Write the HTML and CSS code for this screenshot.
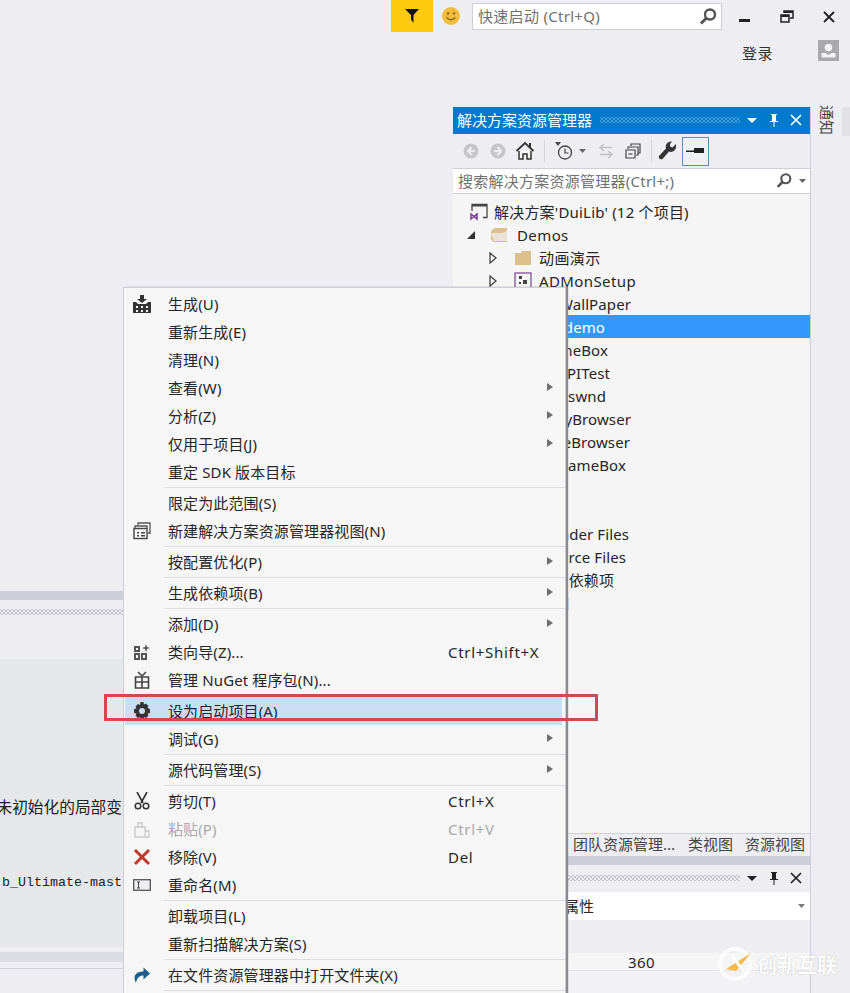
FILE: index.html
```html
<!DOCTYPE html>
<html lang="zh-CN">
<head>
<meta charset="utf-8">
<title>DuiLib - Visual Studio</title>
<link rel="stylesheet" href="styles.css">
</head>
<body>
<div class="ide">
  <header class="top">
    <div class="titlebar">
      <div class="filter"><svg width="16" height="16" viewBox="0 0 16 16"><path d="M1 1h14L9.5 7v8L7 11.5V7z" fill="#111"/></svg></div>
      <svg class="smile" width="20" height="20" viewBox="0 0 20 20"><circle cx="10" cy="10" r="9" fill="#f2bd3c"/><circle cx="7" cy="7.5" r="1.2" fill="#8a6a1a"/><circle cx="13" cy="7.5" r="1.2" fill="#8a6a1a"/><path d="M5.5 11.5q4.500 4.500 9 0" fill="none" stroke="#8a6a1a" stroke-width="1.300"/></svg>
      <div class="quick">
        <span class="quick-text">快速启动 (Ctrl+Q)</span>
        <svg width="20" height="20" viewBox="0 0 20 20"><circle cx="12" cy="7.500" r="5" fill="none" stroke="#555" stroke-width="2.400"/><path d="M8.500 11 3 16.500" stroke="#555" stroke-width="3"/></svg>
      </div>
      <div class="winbtns">
        <svg width="14" height="14" viewBox="0 0 14 14"><rect x="1" y="9" width="11" height="3" fill="#222"/></svg>
        <svg width="14" height="14" viewBox="0 0 14 14"><path d="M4 3V1h9v7h-3M1 5h8v7H1z" fill="none" stroke="#222" stroke-width="1.500"/><path d="M1 5h8v2H1zM4 1h9v2H4z" fill="#222"/></svg>
        <svg width="14" height="14" viewBox="0 0 14 14"><path d="M2 2l10 10M12 2 2 12" stroke="#222" stroke-width="1.800"/></svg>
      </div>
    </div>
    <div class="account">
      <span class="login">登录</span>
      <svg class="avatar" width="21" height="21" viewBox="0 0 21 21"><rect width="21" height="21" fill="#a9a9ad"/><circle cx="10.500" cy="7.500" r="3.800" fill="#f2f2f4"/><path d="M3.500 13h4q3 3.500 6 0h4v4.500h-14z" fill="#f2f2f4"/></svg>
    </div>
  </header>

  <main class="workspace">
    <section class="left">
      <div class="left-top"></div>
      <div class="band"></div>
      <div class="output-head"><div class="dots"></div></div>
      <div class="log">
        <div class="log-line first">未初始化的局部变</div>
        <div class="log-line second">b_Ultimate-mast</div>
      </div>
      <div class="log-foot"><div class="log-scroll"></div></div>
    </section>

    <section class="explorer">
      <div class="pane-title active">
        <span class="pane-name">解决方案资源管理器</span>
        <div class="dots dots-blue"></div>
        <div class="pane-btns">
          <svg width="12" height="12" viewBox="0 0 12 12"><path d="M1 4h10L6 9z" fill="#fff"/></svg>
          <svg width="12" height="14" viewBox="0 0 12 14"><path d="M3 1h6v1H8v6h2v1H2V8h2V2H3zM5.500 9h1v5h-1z" fill="#fff"/></svg>
          <svg width="12" height="12" viewBox="0 0 12 12"><path d="M1 1l10 10M11 1 1 11" stroke="#fff" stroke-width="1.700"/></svg>
        </div>
      </div>
      <div class="toolbar">
        <svg class="t-back" width="18" height="18" viewBox="0 0 18 18"><circle cx="9" cy="9" r="7.500" fill="#c6c6c8"/><path d="M9.500 5 6 9l3.500 4M6.500 9H13" fill="none" stroke="#eeeef2" stroke-width="2"/></svg>
        <svg class="t-fwd" width="18" height="18" viewBox="0 0 18 18"><circle cx="9" cy="9" r="7.500" fill="#c6c6c8"/><path d="M8.500 5 12 9l-3.500 4M11.500 9H5" fill="none" stroke="#eeeef2" stroke-width="2"/></svg>
        <svg class="t-home" width="20" height="20" viewBox="0 0 20 20"><path d="M1.500 10 10 2l8.500 8" fill="none" stroke="#333" stroke-width="1.800"/><path d="M4 10v8h4v-5h4v5h4v-8" fill="#f5f5f5" stroke="#333" stroke-width="1.500"/><path d="M14 2h2v4h-2z" fill="#333"/></svg>
        <span class="t-sep"></span>
        <svg class="t-hist" width="20" height="20" viewBox="0 0 20 20"><path d="M1 1h6L4 5z" fill="#444"/><circle cx="11" cy="11.500" r="6.500" fill="none" stroke="#444" stroke-width="1.300"/><path d="M11 7.500v4.500h3.500" fill="none" stroke="#444" stroke-width="1.200"/></svg>
        <svg class="t-caret" width="8" height="6" viewBox="0 0 8 6"><path d="M0 1h7L3.500 5z" fill="#666"/></svg>
        <svg class="t-sync" width="16" height="16" viewBox="0 0 16 16"><path d="M6 1 2 4.500 6 8M2 4.500h12M10 8l4 3.500L10 15M14 11.500H2" fill="none" stroke="#c2c2c4" stroke-width="1.600"/></svg>
        <svg class="t-copy" width="18" height="18" viewBox="0 0 18 18"><path d="M7 4V2h9v9h-2M4 7V5h10v8h-2M2 8h9v8H2z" fill="none" stroke="#444" stroke-width="1.200"/><path d="M4.500 12h4" stroke="#444" stroke-width="1.200"/></svg>
        <span class="t-sep t-sep2"></span>
        <svg class="t-wrench" width="20" height="20" viewBox="0 0 20 20"><path d="M18 3l-3.500 3.500-2.500-1L12 3l2-2.500C10 0 7 3 8 7.500L1 15c-1 2 1.500 4 3.500 3l6.500-7.500c4 1.500 8-1.500 7-7.500z" fill="#333"/></svg>
        <span class="t-active"><svg width="20" height="10" viewBox="0 0 20 10"><rect x="0" y="4.500" width="8" height="1.500" fill="#222"/><rect x="8" y="2" width="10" height="5" fill="#222"/></svg></span>
      </div>
      <div class="pane-search">
        <span class="search-text">搜索解决方案资源管理器(Ctrl+;)</span>
        <svg width="18" height="18" viewBox="0 0 20 20"><circle cx="12" cy="7.500" r="5" fill="none" stroke="#555" stroke-width="2.400"/><path d="M8.500 11 3 16.500" stroke="#555" stroke-width="3"/></svg>
        <svg class="caret-s" width="8" height="6" viewBox="0 0 8 6"><path d="M0 1h7L3.500 5z" fill="#666"/></svg>
      </div>
      <div class="tree">
        <div class="row lv0">
          <svg class="ti" width="18" height="18" viewBox="0 0 18 18"><path d="M2 8V1.500h15v13h-4" fill="none" stroke="#444" stroke-width="1.300"/><path d="M2 1.500h15v2H2z" fill="#444"/><path d="M1 11v5l2-1.500 4-3.500v5l-4-3.500L1 11z" fill="none" stroke="#7a3b98" stroke-width="1.500"/></svg>
          <span>解决方案'DuiLib' (12 个项目)</span>
        </div>
        <div class="row lv1">
          <svg class="arrow" width="10" height="10" viewBox="0 0 10 10"><path d="M9 1v8H1z" fill="#333"/></svg>
          <svg class="ti" width="20" height="16" viewBox="0 0 20 16"><path d="M3 3 6 1h12v14H5L2 13V5z" fill="#dcc08c"/><path d="M2 6h11l5-2v10H5z" fill="#eeeef0" opacity=".75"/></svg>
          <span>Demos</span>
        </div>
        <div class="row lv2">
          <svg class="arrow" width="10" height="12" viewBox="0 0 10 12"><path d="M2 1l6 5-6 5z" fill="none" stroke="#444" stroke-width="1.300"/></svg>
          <svg class="ti" width="18" height="16" viewBox="0 0 18 16"><path d="M1 3h6l1-2h9v14H1z" fill="#dcc08c"/></svg>
          <span>动画演示</span>
        </div>
        <div class="row lv2">
          <svg class="arrow" width="10" height="12" viewBox="0 0 10 12"><path d="M2 1l6 5-6 5z" fill="none" stroke="#444" stroke-width="1.300"/></svg>
          <svg class="ti" width="18" height="18" viewBox="0 0 18 18"><rect x="1" y="1" width="16" height="16" fill="none" stroke="#8b5a9f" stroke-width="1.400"/><path d="M5 4h3v3H5zM9 8h4v4H9zM5 10h2v2H5z" fill="#444"/></svg>
          <span>ADMonSetup</span>
        </div>
        <div class="row lv2"><span class="cut to631">BkWallPaper</span></div>
        <div class="row lv2 selected"><span class="cut to605">duidemo</span></div>
        <div class="row lv2"><span class="cut to608">GameBox</span></div>
        <div class="row lv2"><span class="cut to610">APITest</span></div>
        <div class="row lv2"><span class="cut to606">Aswnd</span></div>
        <div class="row lv2"><span class="cut to631">MyBrowser</span></div>
        <div class="row lv2"><span class="cut to630">WeBrowser</span></div>
        <div class="row lv2"><span class="cut to626">GameBox</span></div>
        <div class="row lv2"></div>
        <div class="row lv2"></div>
        <div class="row lv2"><span class="cut to629">Header Files</span></div>
        <div class="row lv2"><span class="cut to626">Source Files</span></div>
        <div class="row lv2"><span class="cut to614">外部依赖项</span></div>
        <div class="row lv2"><span class="cut to569">说明</span></div>
      </div>
      <nav class="tabs">
        <span class="tab-a">团队资源管理...</span>
        <span class="tab-b">类视图</span>
        <span class="tab-c">资源视图</span>
      </nav>
      <div class="band"></div>
      <div class="pane-title">
        <div class="dots"></div>
        <div class="pane-btns">
          <svg width="12" height="12" viewBox="0 0 12 12"><path d="M1 4h10L6 9z" fill="#222"/></svg>
          <svg width="12" height="14" viewBox="0 0 12 14"><path d="M3 1h6v1H8v6h2v1H2V8h2V2H3zM5.500 9h1v5h-1z" fill="#222"/></svg>
          <svg width="12" height="12" viewBox="0 0 12 12"><path d="M1 1l10 10M11 1 1 11" stroke="#222" stroke-width="1.700"/></svg>
        </div>
      </div>
      <div class="prop-select">
        <span class="prop-name">项目属性</span>
        <svg width="8" height="6" viewBox="0 0 8 6"><path d="M0 1h7L3.500 5z" fill="#777"/></svg>
      </div>
      <div class="prop-gap"></div>
      <div class="prop-row"><span>360</span></div>
      <div class="prop-rest"></div>
    </section>

    <aside class="rail">
      <span class="notify">通知</span>
      <span class="rail-strip"></span>
    </aside>
  </main>

  <div class="menu">
    <div class="item"><span class="ic"><svg width="20" height="18" viewBox="0 0 20 18"><path d="M8 0h4v4h3l-5 4-5-4h3z" fill="#333"/><path d="M1 7h3l2 2h8l2-2h3v11H1z" fill="#333"/><path d="M4 11h2v2H4zM9 11h2v2H9zM14 11h2v2h-2zM4 15h2v2H4zM9 15h2v2H9zM14 15h2v2h-2z" fill="#f6f6f6"/></svg></span><span>生成(U)</span></div>
    <div class="item"><span class="ic"></span><span>重新生成(E)</span></div>
    <div class="item"><span class="ic"></span><span>清理(N)</span></div>
    <div class="item"><span class="ic"></span><span>查看(W)</span><i class="more"></i></div>
    <div class="item"><span class="ic"></span><span>分析(Z)</span><i class="more"></i></div>
    <div class="item"><span class="ic"></span><span>仅用于项目(J)</span><i class="more"></i></div>
    <div class="item"><span class="ic"></span><span>重定 SDK 版本目标</span></div>
    <div class="sep"></div>
    <div class="item"><span class="ic"></span><span>限定为此范围(S)</span></div>
    <div class="item"><span class="ic"><svg width="20" height="18" viewBox="0 0 20 18"><path d="M6 3V1h12v10h-2M3 6V4h12v2" fill="none" stroke="#555" stroke-width="1.300"/><rect x="2" y="6.500" width="13" height="10" fill="none" stroke="#444" stroke-width="1.400"/><path d="M5 10h2v1.500H5zM9 10h4v1.500H9zM5 13h2v1.500H5zM9 13h4v1.500H9z" fill="#444"/></svg></span><span>新建解决方案资源管理器视图(N)</span></div>
    <div class="sep"></div>
    <div class="item"><span class="ic"></span><span>按配置优化(P)</span><i class="more"></i></div>
    <div class="sep"></div>
    <div class="item"><span class="ic"></span><span>生成依赖项(B)</span><i class="more"></i></div>
    <div class="sep"></div>
    <div class="item"><span class="ic"></span><span>添加(D)</span><i class="more"></i></div>
    <div class="item"><span class="ic"><svg width="18" height="18" viewBox="0 0 18 18"><path d="M1 3h6v6H1zM1 10h6v7H1zM8 10h6v7H8z" fill="#555"/><path d="M3 5h2v2H3zM3 12h2v3H3zM10 12h2v3h-2z" fill="#f6f6f6"/><path d="M13 1l1 3 3 1-3 1-1 3-1-3-3-1 3-1z" fill="#555"/></svg></span><span>类向导(Z)...</span><span class="key">Ctrl+Shift+X</span></div>
    <div class="item"><span class="ic"><svg width="16" height="18" viewBox="0 0 16 18"><path d="M1.500 6h13v11h-13zM1.500 11h13M8 6v11" fill="none" stroke="#444" stroke-width="1.600"/><path d="M4 1l4 4 4-4" fill="none" stroke="#444" stroke-width="1.500"/></svg></span><span>管理 NuGet 程序包(N)...</span></div>
    <div class="sep"></div>
    <div class="item hot"><span class="ic"><svg width="18" height="18" viewBox="0 0 18 18"><path d="M7.500 0h3l.5 2.500 2-1 2.500 2.500-1 2L17 7v4l-2.500.5 1 2-2.500 2.500-2-1-.5 2.500h-3l-.5-2.500-2 1L2.500 13.500l1-2L1 11V7l2.500-.5-1-2L5 2l2 1z" fill="#333"/><circle cx="9" cy="9" r="3" fill="#c9def5"/></svg></span><span>设为启动项目(A)</span></div>
    <div class="item"><span class="ic"></span><span>调试(G)</span><i class="more"></i></div>
    <div class="sep"></div>
    <div class="item"><span class="ic"></span><span>源代码管理(S)</span><i class="more"></i></div>
    <div class="sep"></div>
    <div class="item"><span class="ic"><svg width="16" height="18" viewBox="0 0 16 18"><path d="M3 0l6 11M13 0 7 11" stroke="#333" stroke-width="1.600"/><circle cx="4" cy="14" r="2.800" fill="none" stroke="#333" stroke-width="1.500"/><circle cx="12" cy="14" r="2.800" fill="none" stroke="#333" stroke-width="1.500"/></svg></span><span>剪切(T)</span><span class="key">Ctrl+X</span></div>
    <div class="item off"><span class="ic"><svg width="16" height="18" viewBox="0 0 16 18"><path d="M1 7h10v10H1zM11 11h4v6h-4M4 7V3h4v4" fill="none" stroke="#c9c9c9" stroke-width="1.300"/></svg></span><span>粘贴(P)</span><span class="key">Ctrl+V</span></div>
    <div class="item"><span class="ic"><svg width="18" height="18" viewBox="0 0 18 18"><path d="M2 2l14 14M16 2 2 16" stroke="#c0392b" stroke-width="3"/></svg></span><span>移除(V)</span><span class="key">Del</span></div>
    <div class="item"><span class="ic"><svg width="18" height="14" viewBox="0 0 18 14"><rect x=".7" y="1.700" width="16.600" height="10.600" fill="#eeeef0" stroke="#555" stroke-width="1.300"/><path d="M4 4h3M5.500 4v6M4 10h3" stroke="#444"/></svg></span><span>重命名(M)</span></div>
    <div class="sep"></div>
    <div class="item"><span class="ic"></span><span>卸载项目(L)</span></div>
    <div class="item"><span class="ic"></span><span>重新扫描解决方案(S)</span></div>
    <div class="sep"></div>
    <div class="item"><span class="ic"><svg width="18" height="18" viewBox="0 0 18 18"><path d="M3 17C-1 9 4 5.500 10.500 5.500V1.500L17 7.500l-6.500 6V9.500C6.500 9.500 4 11.500 3 17z" fill="#1b5e8c"/></svg></span><span>在文件资源管理器中打开文件夹(X)</span></div>
    <div class="sep"></div>
  </div>

  <div class="redbox"></div>

  <div class="watermark">
    <svg width="38" height="38" viewBox="0 0 38 38"><circle cx="19" cy="19" r="15" fill="none" stroke="#fff" stroke-width="4" opacity=".85"/><path d="M10 24 35 8 20 26z" fill="#f3b73e"/><path d="M17 12l12 16" stroke="#fff" stroke-width="3"/></svg>
    <span>创新互联</span>
  </div>
</div>
</body>
</html>
```

FILE: styles.css
```css
* { box-sizing: border-box; }
html, body { margin: 0; padding: 0; }
body {
  width: 850px;
  height: 993px;
  overflow: hidden;
  background: #eeeef2;
  font-family: "Noto Sans", "Noto Sans CJK SC", sans-serif;
  font-size: 15px;
  color: #262626;
}
svg { display: block; flex: none; }

.ide { position: relative; width: 850px; height: 993px; overflow: hidden; }

/* top area */
.top { height: 107px; }
.titlebar { display: flex; align-items: flex-start; height: 32px; padding-left: 391px; }
.filter {
  width: 42px; height: 32px; background: #ffc90e;
  display: flex; align-items: center; justify-content: center;
}
.smile { margin: 6px 0 0 8px; }
.quick {
  width: 250px; height: 27px; margin: 3px 0 0 11px; padding: 0 3px 0 5px;
  display: flex; align-items: center; justify-content: space-between;
  background: #fff; border: 1px solid #ccced8;
}
.quick-text { color: #717171; line-height: 25px; letter-spacing: .3px; }
.winbtns { display: flex; gap: 28px; padding: 10px 0 0 16px; }
.account { display: flex; align-items: flex-start; height: 40px; padding: 8px 0 0 742px; }
.login { line-height: 26px; width: 76px; color: #333; letter-spacing: .5px; }

/* main grid */
.workspace {
  display: grid;
  grid-template-columns: 453px 358px 39px;
  height: 886px;
}

/* left column */
.left { display: flex; flex-direction: column; }
.left-top { height: 484px; }
.band { height: 9px; background: #ccced8; flex: none; }
.output-head { height: 59px; padding-top: 9px; }
.log { height: 288px; background: #e6e7e8; padding-top: 138px; }
.log-line {
  width: 122px; height: 20px; line-height: 20px;
  display: flex; justify-content: flex-end; overflow: hidden; white-space: nowrap;
  font-family: "Liberation Mono", "Noto Sans CJK SC", monospace; font-size: 13.33px; color: #222;
}
.log-line.first { font-family: "Noto Sans CJK SC", monospace; font-size: 15.7px; }
.log-line.second { margin-top: 56px; }
.log-foot { padding-top: 5px; height: 47px; }
.log-scroll { height: 10px; background: #dcdde2; box-shadow: 0 6px 0 #eeeef2, 0 7px 0 #d0d1d8; }

.dots {
  flex: 1; height: 6px;
  background-image:
    radial-gradient(circle, #c2c2c8 0.7px, transparent 0.9px),
    radial-gradient(circle, #c2c2c8 0.7px, transparent 0.9px);
  background-size: 4px 4px;
  background-position: 0 0, 2px 2px;
}
.dots-blue {
  background-image:
    radial-gradient(circle, #4a9fd8 0.7px, transparent 0.9px),
    radial-gradient(circle, #4a9fd8 0.7px, transparent 0.9px);
  margin-left: 8px;
}

/* explorer */
.explorer { display: flex; flex-direction: column; border-right: 1px solid #ccced8; }
.pane-title { display: flex; align-items: center; height: 27px; padding: 0 0 1px 4px; flex: none; }
.pane-title.active { background: #007acc; color: #fff; }
.pane-name { line-height: 26px; }
.pane-btns { display: flex; align-items: center; gap: 10px; width: 70px; padding-left: 6px; }
.toolbar { display: flex; align-items: center; height: 34px; flex: none; padding-left: 9px; }
.t-fwd { margin-left: 9px; }
.t-home { margin-left: 8px; }
.t-sep { width: 1px; height: 22px; background: #d6d6da; margin: 0 9px 0 9px; }
.t-caret { margin-left: 5px; }
.t-sync { margin-left: 11px; }
.t-copy { margin-left: 10px; }
.t-sep2 { margin: 0 6px 0 9px; }
.t-active {
  width: 27px; height: 29px; margin-left: 4px;
  display: flex; align-items: center; justify-content: center;
  border: 1px solid #5b8db8; background: #eef0f5;
}
.pane-search {
  display: flex; align-items: center; height: 26px; flex: none; padding: 0 2px 0 5px;
  background: #fff; border-top: 1px solid #ccced8; border-bottom: 1px solid #ccced8;
}
.search-text { color: #717171; width: 317px; line-height: 24px; letter-spacing: .25px; white-space: nowrap; }
.caret-s { margin-left: 6px; }
.tree { height: 639px; background: #f5f5f5; padding-top: 6px; flex: none; }
.row { display: flex; align-items: center; height: 23px; white-space: nowrap; letter-spacing: .4px; }
.row .ti { margin-right: 6px; }
.lv0 { padding-left: 17px; letter-spacing: .2px; }
.lv1 { padding-left: 13px; }
.lv1 .arrow { margin-right: 13px; }
.row.lv1 .ti { margin-right: 8px; }
.lv2 { padding-left: 35px; }
.lv2 .arrow { margin-right: 16px; }
.row.lv2 .ti { margin-right: 7px; }
.cut { display: block; text-align: right; flex: none; letter-spacing: .1px; }
.to569 { width: 81px; }
.to605 { width: 117px; }
.to606 { width: 118px; }
.to608 { width: 120px; }
.to610 { width: 122px; }
.to614 { width: 126px; }
.to626 { width: 138px; }
.to629 { width: 141px; }
.to630 { width: 142px; }
.to631 { width: 143px; }
.selected { background: #3399ff; color: #fff; }
.tabs {
  display: flex; height: 23px; flex: none; align-items: center; line-height: 20px; color: #444;
  padding: 0 0 2px 120px; border-top: 1px solid #ccced8;
}
.tab-a { width: 115px; white-space: nowrap; }
.tab-b { width: 57px; }
.prop-select {
  display: flex; align-items: center; justify-content: flex-end; height: 28px; flex: none;
  background: #fff; padding-right: 4px; position: relative;
}
.prop-name { position: absolute; left: 81px; line-height: 28px; }
.prop-gap { height: 33px; flex: none; }
.prop-row { height: 17px; flex: none; line-height: 18px; padding-left: 175px; background: #f5f5f5; letter-spacing: .4px; }
.prop-rest { flex: 1; background: #f2f2f4; border-top: 1px solid #e4e4e8; border-bottom: 1px solid #ccced8; }

/* rail */
.rail { display: flex; align-items: flex-start; height: 40px; }
.notify {
  writing-mode: vertical-rl; text-orientation: sideways;
  margin: -2px 0 0 7px; line-height: 18px; color: #444; width: 18px;
}
.rail-strip { width: 8px; height: 29px; margin: 0 0 0 6px; background: #e1e1e6; }

/* context menu */
.menu {
  position: absolute; left: 123px; top: 287px; width: 443px; height: 720px;
  padding-top: 2px;
  background: #f6f6f6; border: 1px solid #ccced8;
  box-shadow: 2px 0 1px #8b8b8b;
  letter-spacing: .12px;
}
.item {
  display: flex; align-items: center; height: 28px; margin: 0 3px 0 1px; line-height: 28px;
  white-space: nowrap; position: relative;
}
.ic { width: 43px; display: flex; align-items: center; justify-content: center; padding-right: 9px; flex: none; }
.key { position: absolute; left: 323px; letter-spacing: .7px; }
.more {
  position: absolute; right: 9px; top: 9px;
  border-left: 6px solid #6f6f6f; border-top: 4.500px solid transparent; border-bottom: 4.500px solid transparent;
}
.sep { height: 1px; margin: 1px 0 1px 40px; background: #dcdde0; }
.hot { background: #c9def5; }
.off { color: #a9a9a9; }

.redbox {
  position: absolute; left: 104px; top: 694px; width: 494px; height: 27px;
  border: 3px solid #cf4a4a;
}

.watermark {
  position: absolute; left: 716px; top: 945px;
  display: flex; align-items: center; gap: 3px; opacity: .92;
  font-size: 20px; font-weight: 700; color: #fff;
  text-shadow: 0 0 1px #aaa;
}
```
